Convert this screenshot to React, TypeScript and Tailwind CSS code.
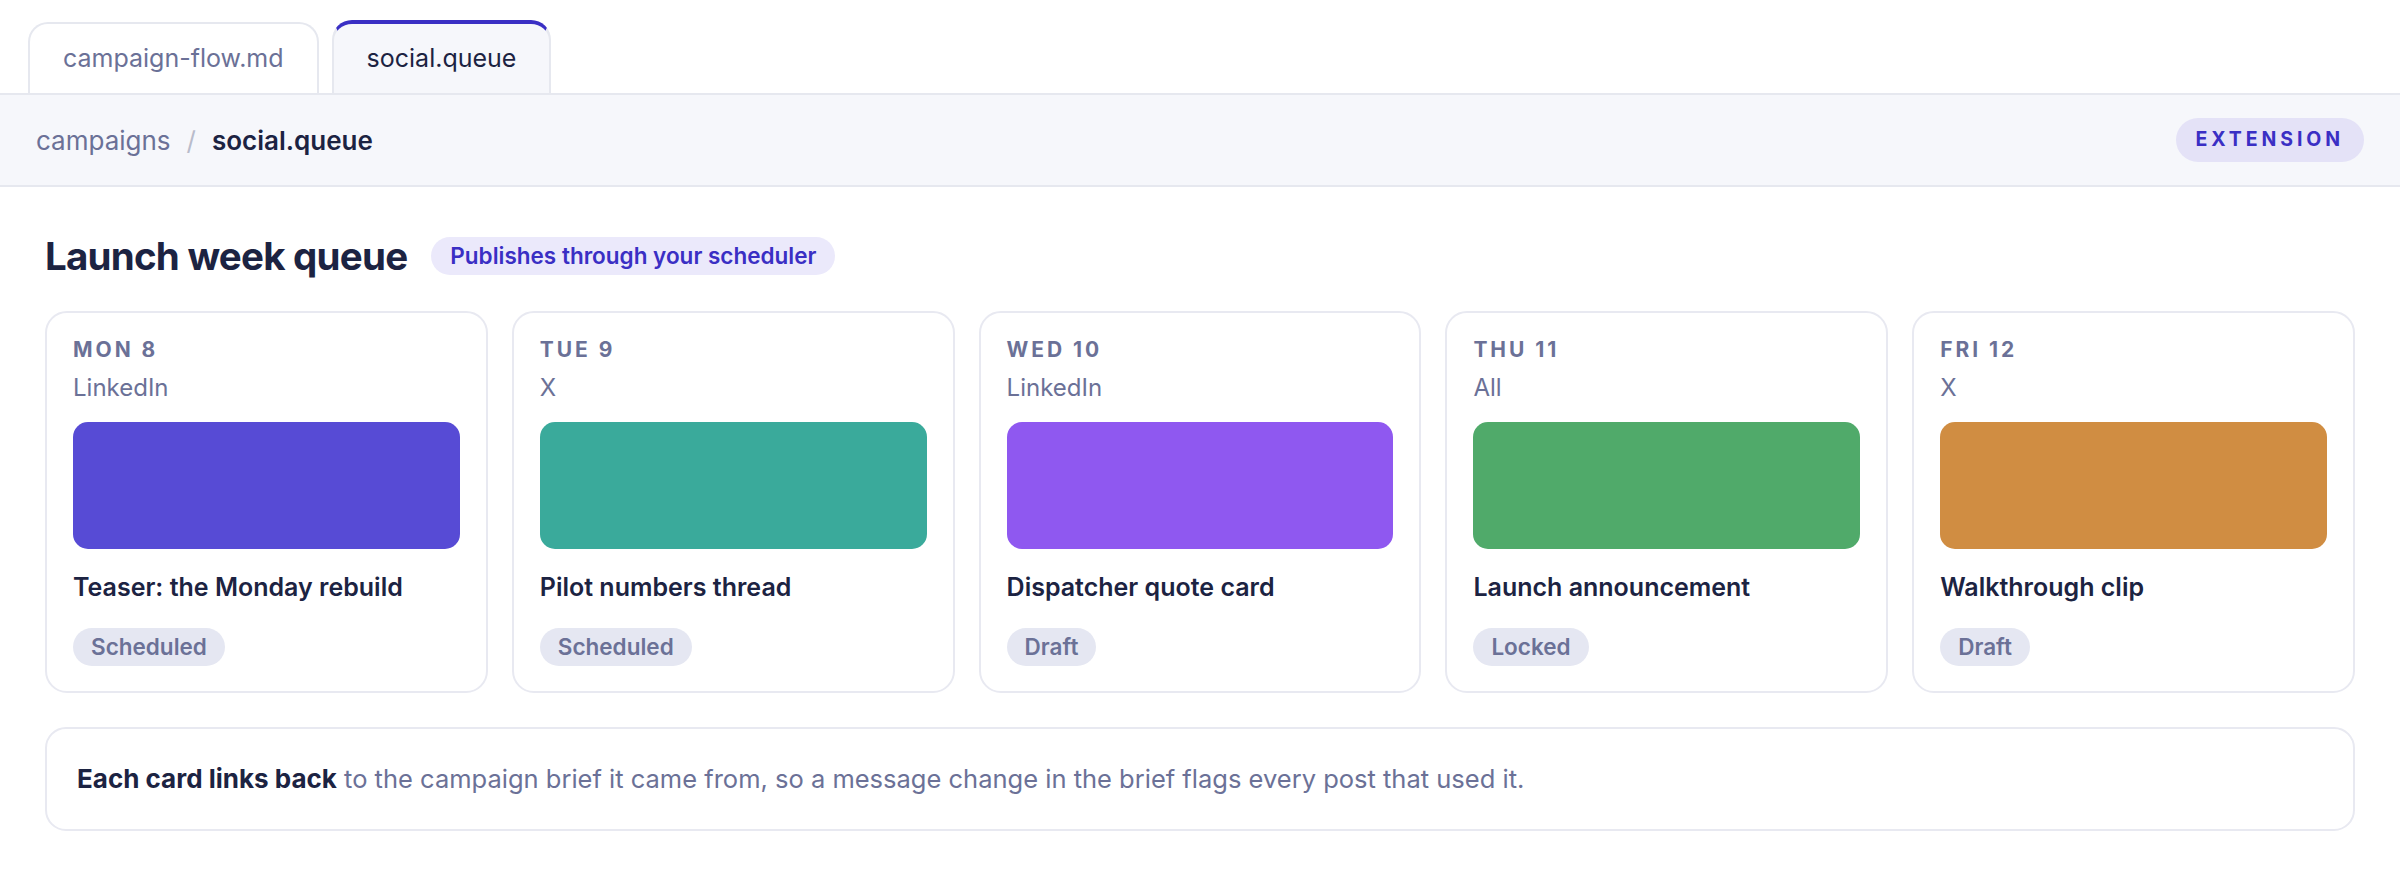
import React from 'react';

type Post = {
  day: string;
  channel: string;
  title: string;
  status: string;
  swatch: string;
};

const posts: Post[] = [
  { day: 'MON 8', channel: 'LinkedIn', title: 'Teaser: the Monday rebuild', status: 'Scheduled', swatch: 'bg-[#574bd5]' },
  { day: 'TUE 9', channel: 'X', title: 'Pilot numbers thread', status: 'Scheduled', swatch: 'bg-[#3aaa9b]' },
  { day: 'WED 10', channel: 'LinkedIn', title: 'Dispatcher quote card', status: 'Draft', swatch: 'bg-[#8f58f0]' },
  { day: 'THU 11', channel: 'All', title: 'Launch announcement', status: 'Locked', swatch: 'bg-[#50aa6a]' },
  { day: 'FRI 12', channel: 'X', title: 'Walkthrough clip', status: 'Draft', swatch: 'bg-[#d08d42]' },
];

const Tabs = () => (
  <div className="flex items-end gap-[13px] pl-[28px] pt-[20px]">
    <div className="flex h-[71px] items-center rounded-t-[20px] border-2 border-b-0 border-[#e6e8ef] bg-white px-[33px] text-[25px] text-[#6b7197]">
      campaign-flow.md
    </div>
    <div className="flex h-[73px] items-center rounded-t-[20px] border-2 border-b-0 border-t-4 border-[#e6e8ef] border-t-[#3a2fc4] bg-[#f6f7fb] px-[33px] text-[25px] text-[#1c2342]">
      social.queue
    </div>
  </div>
);

const Breadcrumb = () => (
  <header className="flex h-[94px] items-center justify-between border-y-2 border-[#e6e8ef] bg-[#f6f7fb] px-[36px]">
    <div className="flex items-center text-[26px]">
      <span className="text-[#6b7197]">campaigns</span>
      <span className="mx-[16px] text-[#b9bccb]">/</span>
      <span className="font-semibold text-[#1c2342]">social.queue</span>
    </div>
    <span className="flex h-[44px] items-center rounded-full bg-[#e4e2f7] px-[20px] text-[19.5px] font-bold tracking-[0.2em] text-[#3a2fc4]">
      EXTENSION
    </span>
  </header>
);

const PostCard = ({ post }: { post: Post }) => (
  <div className="flex flex-col rounded-[22px] border-2 border-[#e8e9f1] bg-white px-[26px] pb-[25px] pt-[22px]">
    <div className="text-[21px] font-bold leading-[30px] tracking-[0.14em] text-[#6b7197]">{post.day}</div>
    <div className="mt-[5px] text-[24px] leading-[36px] text-[#6b7197]">{post.channel}</div>
    <div className={`mt-[16px] h-[127px] rounded-[15px] ${post.swatch}`} />
    <div className="mt-[20px] text-[25px] font-semibold leading-[36px] text-[#1c2342]">{post.title}</div>
    <div className="mt-[23px] flex">
      <span className="flex h-[38px] items-center rounded-full bg-[#e5e7f2] px-[18px] text-[22.5px] font-semibold text-[#6b7197]">
        {post.status}
      </span>
    </div>
  </div>
);

export default function App() {
  return (
    <div className="min-h-screen bg-white font-['Inter',sans-serif]">
      <Tabs />
      <Breadcrumb />
      <main className="px-[45px] pt-[46px]">
        <div className="mb-[32px] flex items-center gap-[24px]">
          <h1 className="text-[38.5px] font-bold leading-[46px] tracking-[-0.02em] text-[#1c2342]">Launch week queue</h1>
          <span className="flex h-[38px] items-center rounded-full bg-[#ebe9fb] px-[19px] text-[22.5px] font-semibold text-[#3a2fc4]">
            Publishes through your scheduler
          </span>
        </div>

        <div className="grid grid-cols-5 gap-[24px]">
          {posts.map((p) => (
            <PostCard key={p.day} post={p} />
          ))}
        </div>

        <div className="mt-[34px] flex h-[104px] items-center rounded-[21px] border-2 border-[#e8e9f1] px-[30px] text-[25.5px] text-[#6b7197]">
          <p>
            <span className="text-[26px] font-bold text-[#1c2342]">Each card links back</span> to the campaign brief it came
            from, so a message change in the brief flags every post that used it.
          </p>
        </div>
      </main>
    </div>
  );
}
